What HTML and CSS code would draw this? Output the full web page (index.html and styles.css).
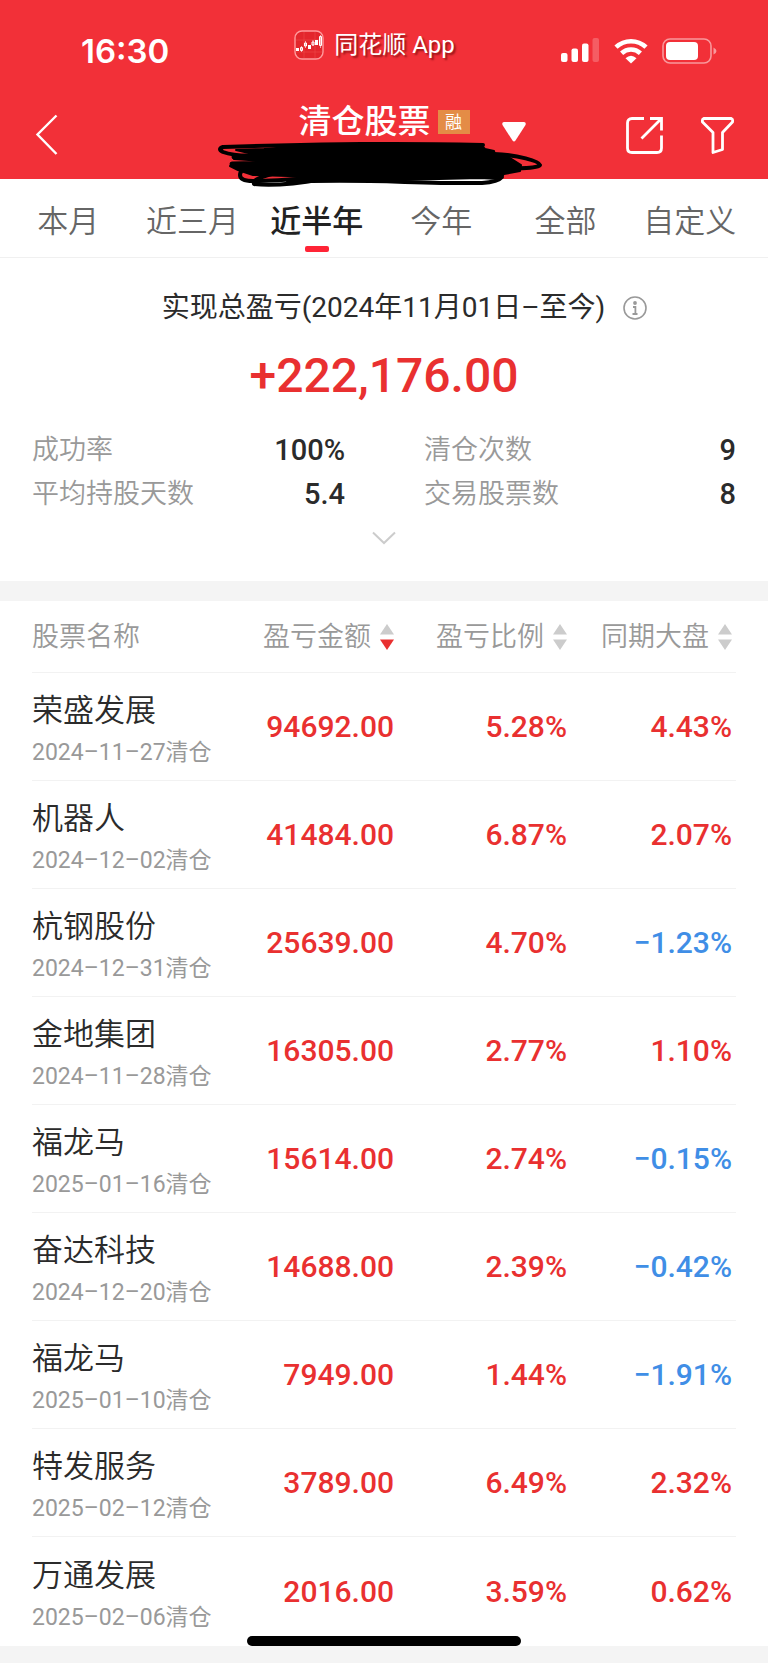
FILE: index.html
```html
<!DOCTYPE html>
<html lang="zh-CN">
<head>
<meta charset="utf-8">
<meta name="viewport" content="width=device-width, initial-scale=1">
<title>清仓股票</title>
<link rel="stylesheet" href="styles.css">
</head>
<body>
<header class="header">
  <div class="status">
    <time class="clock">16:30</time>
    <div class="source">
      <svg class="app-icon" width="30" height="30" viewBox="0 0 30 30" aria-hidden="true">
        <rect x="1" y="1" width="28" height="28" rx="7" fill="#e3262c" stroke="#ff9a9c" stroke-width="1.4"/>
        <path d="M2 10H28M2 22H28M10 2V28M21 2V28" stroke="#ef4a4c" stroke-width=".6"/>
        <path d="M2 18h3v3H2zM14 15h3v4h-3zM21 10h3v5h-3z" fill="#fff"/>
        <path d="M6.500 17.500h2v3h-2zM10.500 13h2v3h-2zM18 12h2v3h-2zM25.500 6.500h2v9h-2z" fill="none" stroke="#fff"/>
        <path d="M11.500 11v7M7.500 16v6M19 10v6M26.500 5v13" stroke="#fff" stroke-width=".6"/>
      </svg>
      <span>同花顺 App</span>
    </div>
    <div class="indicators">
      <svg width="40" height="26" viewBox="0 0 40 26" fill="#fff" aria-label="信号">
        <rect x="1" y="15" width="6.500" height="9" rx="2"/><rect x="11.500" y="10.500" width="6.500" height="13.500" rx="2"/><rect x="22" y="5.500" width="6.500" height="18.500" rx="2"/><rect x="32.500" y="0" width="6.500" height="24" rx="2" opacity=".22"/>
      </svg>
      <svg width="34" height="26" viewBox="0 0 34 26" fill="none" stroke="#fff" stroke-width="4.600" aria-label="无线网络">
        <path d="M2 9.200C10.500 1.200 23.500 1.200 32 9.200"/><path d="M7.600 15.200C13 10.200 21 10.200 26.400 15.200"/><path d="M11.500 20.200Q17 15.200 22.500 20.200L17 25.500z" fill="#fff" stroke="none"/>
      </svg>
      <svg width="56" height="26" viewBox="0 0 56 26" aria-label="电量">
        <rect x="1" y="1" width="48" height="24" rx="7" fill="none" stroke="#fff" stroke-opacity=".5" stroke-width="1.600"/><rect x="4" y="4" width="32" height="18" rx="4" fill="#fff"/><path d="M51.500 9.500Q54.500 11 54.500 13T51.500 16.500z" fill="#fff" opacity=".5"/>
      </svg>
    </div>
  </div>
  <div class="nav">
    <button class="icon-btn back" aria-label="返回">
      <svg width="24" height="42" viewBox="0 0 24 42" fill="none" stroke="#fff" stroke-width="2.400"><path d="M22.500 1.500 3.500 20.500 22.500 40"/></svg>
    </button>
    <div class="title-group"><h1 class="title">清仓股票</h1><span class="badge">融</span></div>
    <div class="actions">
      <button class="icon-btn account" aria-label="切换账户">
        <svg width="24" height="20" viewBox="0 0 24 20" fill="#fff"><path d="M2 0H22Q24.500 .5 23.500 3L13.500 18.500Q12 20.500 10.500 18.500L.5 3Q-.5 .5 2 0z"/></svg>
      </button>
      <button class="icon-btn share" aria-label="分享">
        <svg width="37" height="37" viewBox="0 0 37 37" fill="none" stroke="#fff" stroke-width="2.800"><path d="M18 1.500H6Q1.500 1.500 1.500 6V31Q1.500 35.500 6 35.500H31Q35.500 35.500 35.500 31V18.500"/><path d="M24 1.500H35.500V13.500M35.500 1.500 15.500 21.500"/></svg>
      </button>
      <button class="icon-btn" aria-label="筛选">
        <svg width="33" height="37" viewBox="0 0 33 37" fill="none" stroke="#fff" stroke-width="2.800" stroke-linejoin="round"><path d="M2.500 1.500H30.500Q32 1.800 31.500 5L21.500 15.500V32.500L12 35.500V15.500L1.500 5Q1 1.800 2.500 1.500z"/></svg>
      </button>
    </div>
    <svg class="scribble" width="326" height="48" viewBox="0 0 326 48" fill="none" stroke="#000" stroke-width="4" stroke-linecap="round" stroke-linejoin="round" aria-hidden="true">
      <path d="M46 7Q120 0 264 4L267 7 276 9 277 13 292 16 303 23 302 29 286 32 280 37 262 36 180 38 105 37 70 34 35 33 20 28 12 24 44 19 16 17 44 14 18 8z" fill="#000" stroke-width="2"/>
      <path d="M265 3C150 1 90 2 5 5Q-1 7 5 10Q18 15 45 13"/>
      <path d="M16 15Q90 13 200 15M14 22Q100 20 270 14" stroke-width="5"/>
      <path d="M276 12C300 13 321 19 322 23Q318 27 290 26"/>
      <path d="M35 26Q22 26 22 33Q22 39 35 39 55 39 92 36"/>
      <path d="M54 32Q34 37 36 42Q60 45 105 37L88 33Q150 42 283 30"/>
      <path d="M70 40C140 36 200 42 264 41Q280 40 284 35L276 30M100 38Q190 34 284 33"/>
    </svg>
  </div>
</header>

<nav class="tabs">
  <button class="tab">本月</button><button class="tab">近三月</button><button class="tab active" aria-current="true">近半年</button><button class="tab">今年</button><button class="tab">全部</button><button class="tab">自定义</button>
</nav>

<main>
  <section class="summary">
    <div class="summary-title">
      <h2 class="caption">实现总盈亏(2024年11月01日–至今)</h2>
      <button class="icon-btn info" aria-label="说明">
        <svg width="24" height="24" viewBox="0 0 24 24" fill="none" stroke="#999" stroke-width="1.600"><circle cx="12" cy="12" r="11"/><circle cx="12" cy="7" r="1.900" fill="#999" stroke="none"/><path d="M10 11H12.400V18M9.500 18H14.500" stroke-width="1.800"/></svg>
      </button>
    </div>
    <p class="total">+222,176.00</p>
    <dl class="stats">
      <div class="stat"><dt>成功率</dt><dd>100%</dd></div>
      <div class="stat"><dt>清仓次数</dt><dd>9</dd></div>
      <div class="stat"><dt>平均持股天数</dt><dd>5.4</dd></div>
      <div class="stat"><dt>交易股票数</dt><dd>8</dd></div>
    </dl>
    <button class="icon-btn expand" aria-label="展开">
      <svg width="24" height="14" viewBox="0 0 24 14" fill="none" stroke="#ccc" stroke-width="2"><path d="M1 1.500 12 12 23 1.500"/></svg>
    </button>
  </section>

  <section class="holdings">
    <table class="table">
      <thead>
        <tr>
          <th class="col-name" scope="col">股票名称</th>
          <th class="col-amount" scope="col" aria-sort="descending"><button class="sort">盈亏金额<svg width="14" height="26" viewBox="0 0 14 26"><path d="M7 0 14 10.500H0z" fill="#ccc"/><path d="M0 15.500H14L7 26z" fill="#e93030"/></svg></button></th>
          <th class="col-ratio" scope="col"><button class="sort">盈亏比例<svg width="14" height="26" viewBox="0 0 14 26"><path d="M7 0 14 10.500H0zM0 15.500H14L7 26z" fill="#ccc"/></svg></button></th>
          <th class="col-market" scope="col"><button class="sort">同期大盘<svg width="14" height="26" viewBox="0 0 14 26"><path d="M7 0 14 10.500H0zM0 15.500H14L7 26z" fill="#ccc"/></svg></button></th>
        </tr>
      </thead>
      <tbody>
        <tr><td><span class="name">荣盛发展</span><span class="date">2024–11–27清仓</span></td><td class="up">94692.00</td><td class="up">5.28%</td><td class="up">4.43%</td></tr>
        <tr><td><span class="name">机器人</span><span class="date">2024–12–02清仓</span></td><td class="up">41484.00</td><td class="up">6.87%</td><td class="up">2.07%</td></tr>
        <tr><td><span class="name">杭钢股份</span><span class="date">2024–12–31清仓</span></td><td class="up">25639.00</td><td class="up">4.70%</td><td class="down">−1.23%</td></tr>
        <tr><td><span class="name">金地集团</span><span class="date">2024–11–28清仓</span></td><td class="up">16305.00</td><td class="up">2.77%</td><td class="up">1.10%</td></tr>
        <tr><td><span class="name">福龙马</span><span class="date">2025–01–16清仓</span></td><td class="up">15614.00</td><td class="up">2.74%</td><td class="down">−0.15%</td></tr>
        <tr><td><span class="name">奋达科技</span><span class="date">2024–12–20清仓</span></td><td class="up">14688.00</td><td class="up">2.39%</td><td class="down">−0.42%</td></tr>
        <tr><td><span class="name">福龙马</span><span class="date">2025–01–10清仓</span></td><td class="up">7949.00</td><td class="up">1.44%</td><td class="down">−1.91%</td></tr>
        <tr><td><span class="name">特发服务</span><span class="date">2025–02–12清仓</span></td><td class="up">3789.00</td><td class="up">6.49%</td><td class="up">2.32%</td></tr>
        <tr><td><span class="name">万通发展</span><span class="date">2025–02–06清仓</span></td><td class="up">2016.00</td><td class="up">3.59%</td><td class="up">0.62%</td></tr>
      </tbody>
    </table>
  </section>
</main>
<div class="home-bar"></div>
</body>
</html>
```

FILE: styles.css
```css
* { box-sizing: border-box; }

body {
  margin: 0;
  position: relative;
  padding-bottom: 17px;
  background: #f4f4f4;
  color: #2b2b2b;
  font-family: Roboto, "Noto Sans CJK SC", sans-serif;
}

button {
  margin: 0;
  padding: 0;
  border: 0;
  background: none;
  color: inherit;
  font: inherit;
  cursor: pointer;
}

svg { display: block; flex: none; }

h1, h2, p, dl, dd { margin: 0; }

.icon-btn { display: flex; flex: none; }

/* Header */
.header { background: #f23038; color: #fff; }

.status {
  display: grid;
  grid-template-columns: 1fr auto 1fr;
  height: 90px;
  padding: 0 50px 0 31px;
}

.clock {
  padding: 31px 0 0 50px;
  font: 600 33px/40px Inter, sans-serif;
}

.source {
  display: flex;
  gap: 10px;
  align-items: center;
  align-self: start;
  padding-top: 28px;
  font-size: 24px;
  line-height: 34px;
  text-shadow: 2px 2px 2px rgba(90, 0, 0, .6);
}

.indicators {
  display: flex;
  gap: 14px;
  align-items: flex-start;
  justify-content: flex-end;
  padding-top: 38px;
}

.nav {
  position: relative;
  display: grid;
  grid-template-columns: 1fr auto 1fr;
  align-items: center;
  height: 89px;
  padding: 0 34px;
}

.title-group {
  display: flex;
  gap: 7px;
  align-items: center;
  align-self: start;
  padding-top: 9px;
}

.title { font-size: 33px; font-weight: 500; line-height: 46px; }

.badge {
  width: 32px;
  background: #e48c46;
  font-size: 17px;
  line-height: 24px;
  text-align: center;
}

.actions {
  display: flex;
  align-items: center;
  padding: 2px 0 0 32px;
}

.account { margin-bottom: 8px; }

.share { margin: 0 38px 0 auto; }

.scribble { position: absolute; top: 52px; left: calc(50% - 166px); z-index: 1; }

/* Period tabs */
.tabs {
  display: grid;
  grid-template-columns: repeat(6, 1fr);
  height: 79px;
  padding: 0 16px 0 6px;
  border-bottom: 1px solid #f0f0f0;
  background: #fff;
}

.tab {
  display: flex;
  flex-direction: column;
  align-items: center;
  padding-top: 20px;
  color: #666;
  font-size: 31px;
  font-weight: 350;
  line-height: 46px;
}

.tab.active { color: #222; font-weight: 500; }

.tab.active::after {
  content: "";
  width: 24px;
  height: 6px;
  margin-top: 1px;
  border-radius: 2px;
  background: #ff2436;
}

/* Summary */
.summary { height: 323px; padding: 30px 32px 0; background: #fff; }

.summary-title {
  display: flex;
  gap: 18px;
  align-items: center;
  justify-content: center;
  padding-left: 41px;
}

.caption { font-size: 28px; font-weight: 400; line-height: 40px; }

.total {
  padding-top: 18px;
  color: #e93030;
  font-size: 48px;
  font-weight: 500;
  line-height: 60px;
  text-align: center;
}

.stats {
  display: grid;
  grid-template-columns: 313px 1fr;
  column-gap: 79px;
  row-gap: 4px;
  padding-top: 24px;
}

.stat { display: flex; justify-content: space-between; line-height: 40px; }
.stat dt { color: #999; font-size: 27px; font-weight: 350; }
.stat dd { font-size: 29px; font-weight: 500; }

.expand { margin: 17px auto 0; }

/* Cleared positions */
.holdings { margin-top: 20px; padding: 0 32px; background: #fff; }

.table { width: 100%; border-collapse: collapse; table-layout: fixed; }

.col-amount { width: 170px; }
.col-ratio { width: 173px; }
.col-market { width: 169px; }

.table th {
  height: 71px;
  padding: 2px 0 0;
  border-bottom: 1px solid #f2f2f2;
  color: #999;
  font-size: 27px;
  font-weight: 350;
  line-height: 40px;
  text-align: left;
}

.sort { display: flex; gap: 9px; align-items: center; margin-left: auto; white-space: nowrap; }

.table td {
  height: 108px;
  padding: 0;
  border-bottom: 1px solid #f2f2f2;
  font-size: 30px;
  font-weight: 500;
  text-align: right;
}

.table td:first-child { padding-top: 10px; font-weight: 350; text-align: left; white-space: nowrap; }

.table th:last-child, .table td:last-child { padding-right: 4px; }

.table tbody tr:last-child td { height: 110px; border-bottom: 0; }

.name { display: block; font-size: 31px; line-height: 44px; }
.date { display: block; color: #999; font-size: 23px; font-weight: 400; line-height: 40px; }

.up { color: #e93030; }
.down { color: #408ee6; }

.home-bar {
  position: absolute;
  bottom: 17px;
  left: calc(50% - 137px);
  width: 274px;
  height: 10px;
  border-radius: 5px;
  background: #000;
}
```
